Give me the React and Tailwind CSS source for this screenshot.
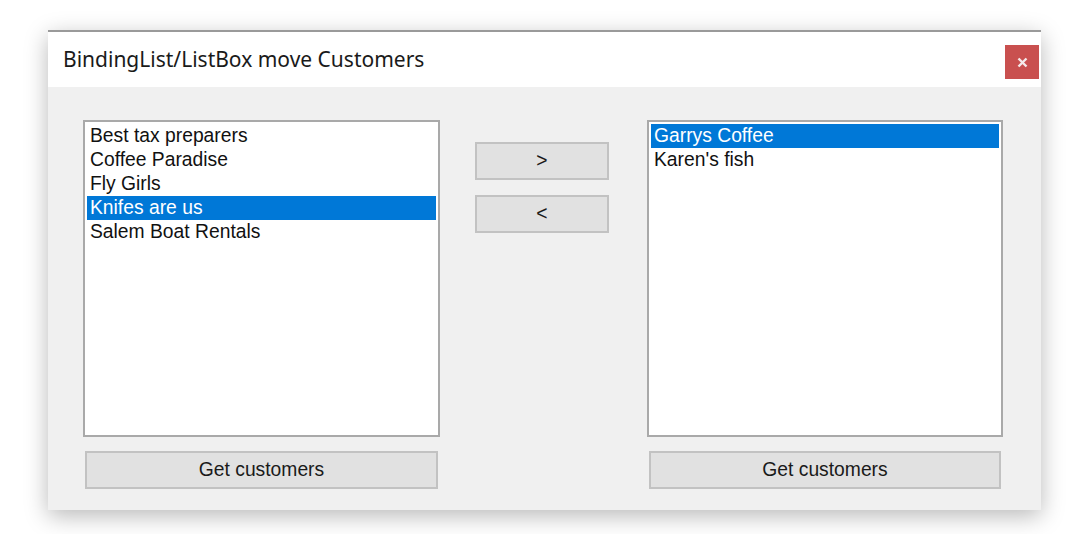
import { useState } from "react";

const listFont = { fontFamily: '"Liberation Sans", Arial, sans-serif' };

function ListBox({ items, selected }) {
  return (
    <div className="h-[317px] border-2 border-[#a9a9a9] bg-white px-[2px] pt-[2px]" style={listFont}>
      {items.map((item, i) => (
        <div
          key={item}
          className={`h-[24px] pl-[3px] text-[19.3px] leading-[24px] ${i === selected ? "bg-[#0078d7] text-white" : "text-[#111]"}`}
        >
          {item}
        </div>
      ))}
    </div>
  );
}

function WinButton({ children, className = "" }) {
  return (
    <button
      className={`h-[38px] border-2 border-[#c2c2c2] bg-[#e1e1e1] text-[19.3px] text-[#1a1a1a] ${className}`}
      style={listFont}
    >
      {children}
    </button>
  );
}

export default function App() {
  const [left] = useState(["Best tax preparers", "Coffee Paradise", "Fly Girls", "Knifes are us", "Salem Boat Rentals"]);
  const [right] = useState(["Garrys Coffee", "Karen's fish"]);

  return (
    <div className="h-[534px] w-[1085px] bg-white pl-[48px] pt-[30px]">
      <div className="flex h-[480px] w-[993px] flex-col bg-[#f0f0f0] shadow-[0_6px_22px_rgba(0,0,0,0.28)]">
        {/* title bar */}
        <div className="flex h-[57px] items-start justify-between border-t-2 border-[#9a9a9a] bg-white">
          <div
            className="pl-[15px] pt-[13px] text-[21px] leading-[28px] text-[#1a1a1a]"
            style={{ fontFamily: '"Noto Sans", "Open Sans", sans-serif' }}
          >
            BindingList/ListBox move Customers
          </div>
          <div className="mr-[2px] mt-[13px] flex h-[34px] w-[34px] items-center justify-center bg-[#c9504f]">
            <svg width="11" height="11" viewBox="0 0 11 11">
              <path d="M1.5 1.5 L9.5 9.5 M9.5 1.5 L1.5 9.5" stroke="#f5eaea" strokeWidth="2.4" />
            </svg>
          </div>
        </div>

        {/* body */}
        <div className="flex pl-[35px] pt-[33px]">
          <div className="flex w-[357px] flex-col">
            <ListBox items={left} selected={3} />
            <WinButton className="mx-[2px] mt-[14px] h-[37px]">Get customers</WinButton>
          </div>

          <div className="ml-[35px] flex w-[134px] flex-col gap-[15px] pt-[22px]">
            <WinButton>&gt;</WinButton>
            <WinButton>&lt;</WinButton>
          </div>

          <div className="ml-[38px] flex w-[356px] flex-col">
            <ListBox items={right} selected={0} />
            <WinButton className="mx-[2px] mt-[14px] h-[37px]">Get customers</WinButton>
          </div>
        </div>
      </div>
    </div>
  );
}
